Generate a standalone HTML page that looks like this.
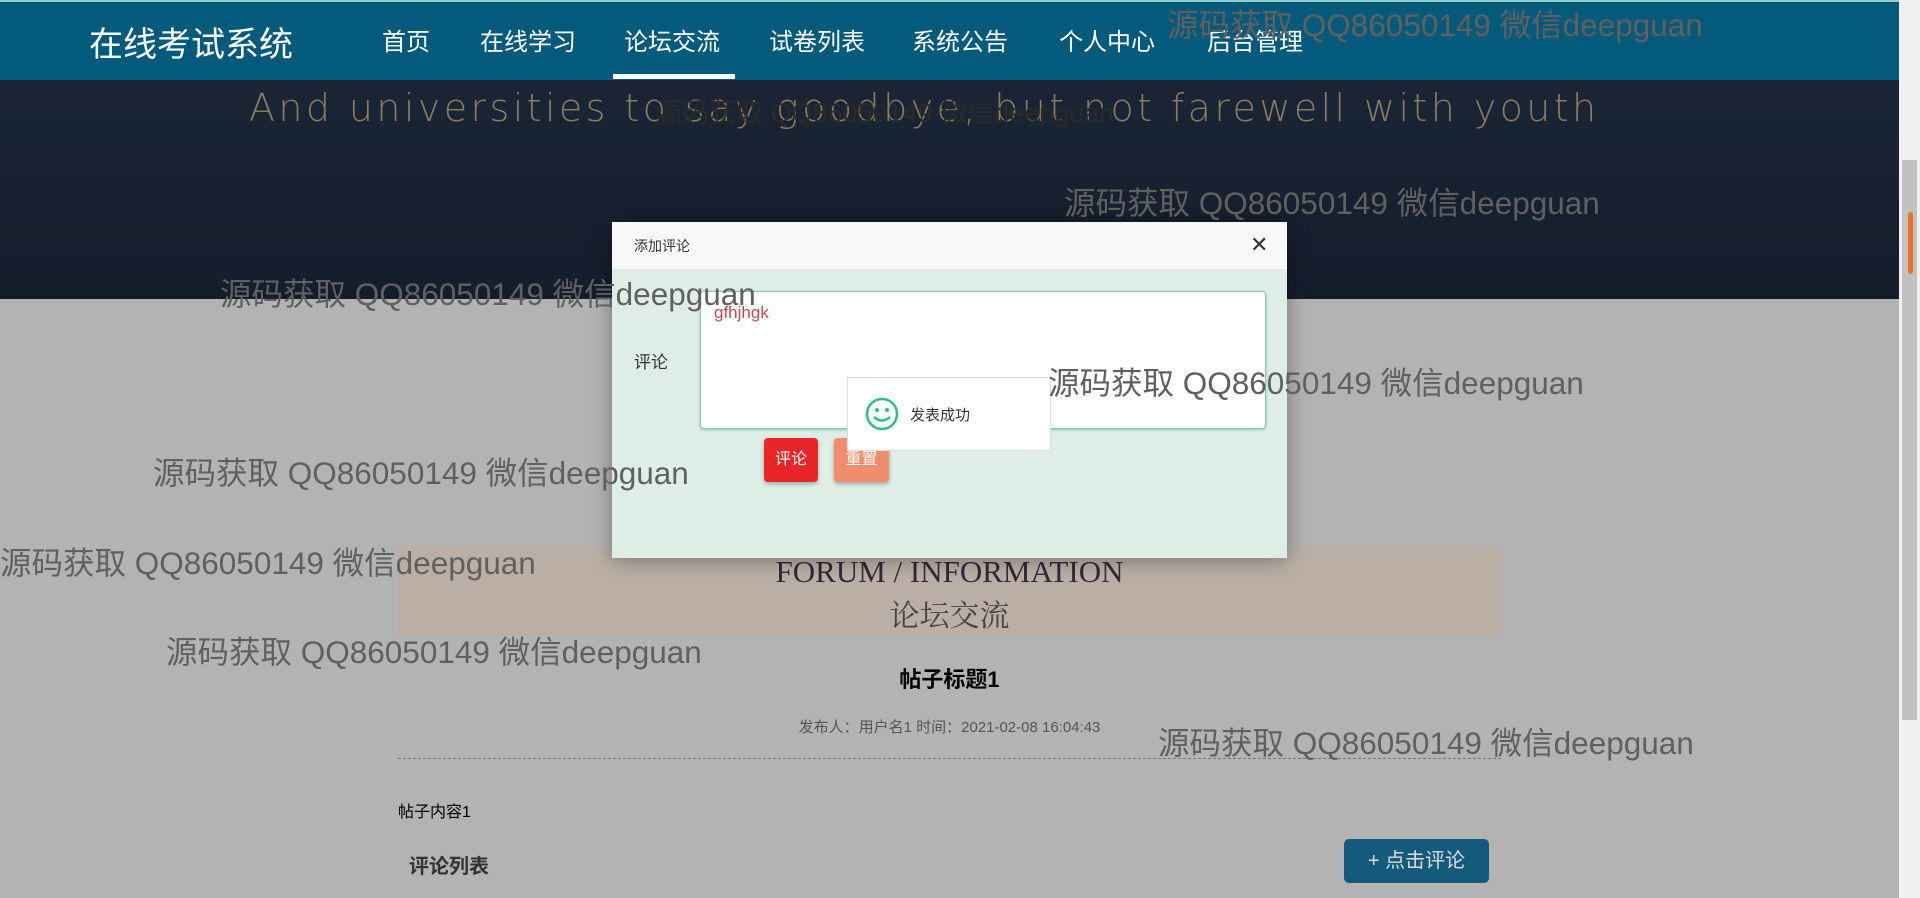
<!DOCTYPE html>
<html><head><meta charset="utf-8"><style>
*{margin:0;padding:0;box-sizing:border-box}
body{width:1920px;height:898px;overflow:hidden;background:#b3b3b3;font-family:"Liberation Sans","Noto Sans CJK SC",sans-serif;position:relative}
.abs{position:absolute;white-space:nowrap}
.nav{left:0;top:0;width:1899px;height:80px;background:#035a7b;border-top:2px solid #9cc}
.banner{left:0;top:80px;width:1899px;height:219px;background:linear-gradient(180deg,#1a2535,#141d2c)}
.wm{color:#606060;font-size:31.5px}
.sb{left:1899px;top:0;width:21px;height:898px;background:#f0f0f0}
</style></head><body>
<div class="abs nav"></div>
<div class="abs" style="left:89px;top:17px;color:#fff;font-size:34px">在线考试系统</div>
<div class="abs" style="left:382px;top:22px;color:#fff;font-size:24px">首页</div>
<div class="abs" style="left:480px;top:22px;color:#fff;font-size:24px">在线学习</div>
<div class="abs" style="left:624px;top:22px;color:#fff;font-size:24px">论坛交流</div>
<div class="abs" style="left:769px;top:22px;color:#fff;font-size:24px">试卷列表</div>
<div class="abs" style="left:912px;top:22px;color:#fff;font-size:24px">系统公告</div>
<div class="abs" style="left:1059px;top:22px;color:#fff;font-size:24px">个人中心</div>
<div class="abs" style="left:1207px;top:22px;color:#fff;font-size:24px">后台管理</div>
<div class="abs" style="left:613px;top:74px;width:122px;height:5px;background:#fff"></div>
<div class="abs banner"></div>
<div class="abs" style="left:249px;top:86px;font-size:38px;color:#8a7a5e;letter-spacing:3.4px;font-family:'DejaVu Sans',sans-serif;font-weight:200">And universities to say goodbye, but not farewell with youth</div>
<div class="abs" style="left:398px;top:547px;width:1103px;height:89px;background:#bbafa5"></div>
<div class="abs" style="left:398px;top:554px;width:1103px;text-align:center;font-family:'Liberation Serif',serif;font-size:31px;color:#302a3a">FORUM / INFORMATION</div>
<div class="abs" style="left:398px;top:591px;width:1103px;text-align:center;font-family:'Liberation Serif','Noto Serif CJK SC',serif;font-size:30px;color:#444">论坛交流</div>
<div class="abs" style="left:398px;top:662px;width:1103px;text-align:center;font-size:22px;font-weight:bold;color:#000">帖子标题1</div>
<div class="abs" style="left:398px;top:716px;width:1103px;text-align:center;font-size:15px;color:#555">发布人：用户名1 时间：2021-02-08 16:04:43</div>
<div class="abs" style="left:398px;top:758px;width:1103px;border-top:1px dashed #777"></div>
<div class="abs" style="left:398px;top:798px;font-size:16px;color:#000">帖子内容1</div>
<div class="abs" style="left:409px;top:850px;font-size:20px;font-weight:bold;color:#333">评论列表</div>
<div class="abs" style="left:1344px;top:839px;width:145px;height:44px;background:#135a7c;border-radius:5px;color:#ddd;font-size:20px;text-align:center;line-height:44px">+ 点击评论</div>
<div class="abs" style="left:612px;top:222px;width:675px;height:336px;background:#deeee7;box-shadow:0 2px 20px rgba(0,0,0,.35)"></div>
<div class="abs" style="left:612px;top:222px;width:675px;height:47px;background:#f8f8f8"></div>
<div class="abs" style="left:634px;top:236px;font-size:14px;color:#333">添加评论</div>
<div class="abs" style="left:1250px;top:232px;font-size:22px;color:#333">✕</div>
<div class="abs" style="left:634px;top:348px;font-size:17px;color:#333">评论</div>
<div class="abs" style="left:700px;top:291px;width:566px;height:138px;background:#fff;border:1px solid #8bbfc0;border-radius:4px;box-shadow:0 1px 3px rgba(0,90,100,.3)"></div>
<div class="abs" style="left:714px;top:303px;font-size:17px;color:#c24a55">gfhjhgk</div>
<div class="abs" style="left:764px;top:438px;width:54px;height:44px;background:#e8262a;border-radius:4px;color:#fff;font-size:16px;text-align:center;line-height:44px;box-shadow:0 2px 4px rgba(0,0,0,.3)">评论</div>
<div class="abs" style="left:834px;top:438px;width:55px;height:44px;background:#f08d6d;border-radius:4px;color:#fff;font-size:16px;text-align:center;line-height:44px;box-shadow:0 2px 4px rgba(0,0,0,.3)">重置</div>
<div class="abs" style="left:847px;top:377px;width:204px;height:74px;background:#fff;border:1px solid #ddd"></div>
<svg class="abs" style="left:864px;top:396px" width="36" height="36" viewBox="0 0 36 36"><circle cx="18" cy="18" r="15" fill="none" stroke="#2fbf7f" stroke-width="2.5"/><circle cx="13" cy="14" r="2" fill="#2fbf7f"/><circle cx="23" cy="14" r="2" fill="#2fbf7f"/><path d="M10 21 Q18 28 26 21" fill="none" stroke="#2fbf7f" stroke-width="2.5"/></svg>
<div class="abs" style="left:910px;top:404px;font-size:15px;color:#333">发表成功</div>
<div class="abs wm" style="left:1167px;top:0px">源码获取 QQ86050149 微信deepguan</div>
<div class="abs wm" style="left:655px;top:91px;color:#2a2a2a;font-size:27px">源码获取 QQ86050149 微信deepguan</div>
<div class="abs wm" style="left:1064px;top:178px">源码获取 QQ86050149 微信deepguan</div>
<div class="abs wm" style="left:220px;top:269px">源码获取 QQ86050149 微信deepguan</div>
<div class="abs wm" style="left:1048px;top:358px">源码获取 QQ86050149 微信deepguan</div>
<div class="abs wm" style="left:153px;top:448px">源码获取 QQ86050149 微信deepguan</div>
<div class="abs wm" style="left:0px;top:538px">源码获取 QQ86050149 微信deepguan</div>
<div class="abs wm" style="left:166px;top:627px">源码获取 QQ86050149 微信deepguan</div>
<div class="abs wm" style="left:1158px;top:718px">源码获取 QQ86050149 微信deepguan</div>
<div class="abs sb"></div>
<div class="abs" style="left:1902px;top:160px;width:15px;height:560px;background:#c1c1c1"></div>
<div class="abs" style="left:1908px;top:212px;width:5px;height:62px;background:#e8742c;border-radius:3px"></div>
</body></html>
